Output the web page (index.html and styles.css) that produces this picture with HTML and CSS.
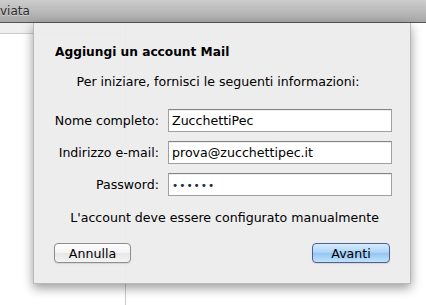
FILE: index.html
```html
<!DOCTYPE html>
<html lang="it">
<head>
    <meta charset="UTF-8">
    <title>Aggiungi un account Mail</title>
    <link rel="stylesheet" href="styles.css">
</head>
<body>
    <div class="window">
        <div class="toolbar">
            <span class="toolbar-title">viata</span>
        </div>

        <div class="content">
            <div class="list-pane">
                <div class="pane-header"></div>
            </div>
            <div class="main-pane"></div>
        </div>

        <!-- account sheet over the mail window -->
        <div class="sheet">
            <div class="sheet-title">Aggiungi un account Mail</div>
            <div class="sheet-intro">Per iniziare, fornisci le seguenti informazioni:</div>

            <div class="form">
                <label class="form-label" for="name">Nome completo:</label>
                <input class="field" id="name" type="text" value="ZucchettiPec">

                <label class="form-label" for="email">Indirizzo e-mail:</label>
                <input class="field" id="email" type="text" value="prova@zucchettipec.it">

                <label class="form-label" for="password">Password:</label>
                <input class="field field-password" id="password" type="password" value="secret">
            </div>

            <div class="sheet-note">L'account deve essere configurato manualmente</div>

            <div class="buttons">
                <button class="button">Annulla</button>
                <button class="button button-default">Avanti</button>
            </div>
        </div>
    </div>
</body>
</html>
```

FILE: styles.css
```css
body {
    margin: 0;
    font-family: "DejaVu Sans", sans-serif;
    font-size: 12.6px;
    color: #000;
    background: #fff;
}

.window {
    position: relative;
    width: 426px;
    height: 305px;
    overflow: hidden;
}

.toolbar {
    height: 22px;
    border-bottom: 1px solid #555;
    background: linear-gradient(#cdcdcd, #a7a7a7);
    display: flex;
    align-items: center;
}

.toolbar-title {
    margin-left: 0;
    font-size: 12px;
    color: #2b2b2b;
    text-shadow: 0 1px 0 rgba(255, 255, 255, 0.45);
}

.content {
    display: flex;
    height: 282px;
}

.list-pane {
    width: 125px;
    border-right: 1px solid #c9c9c9;
}

.pane-header {
    height: 10px;
    background: #efefef;
    border-bottom: 1px solid #cacaca;
}

.main-pane {
    flex: 1;
}

.sheet {
    position: absolute;
    top: 23px;
    left: 33px;
    width: 378px;
    box-sizing: border-box;
    padding: 0 20px 20px;
    background: rgba(236, 236, 236, 0.95);
    border: 1px solid rgba(0, 0, 0, 0.22);
    border-top: none;
    box-shadow: 0 4px 10px rgba(0, 0, 0, 0.4);
}

.sheet-title {
    margin: 21px 0 0 1px;
    font-size: 12.2px;
    font-weight: bold;
    line-height: 16px;
}

.sheet-intro {
    margin-top: 14px;
    padding-right: 8px;
    line-height: 16px;
    text-align: center;
}

.form {
    display: grid;
    grid-template-columns: 105px 224px;
    column-gap: 9px;
    row-gap: 9px;
    margin-top: 19px;
}

.form-label {
    line-height: 23px;
    text-align: right;
}

.field {
    height: 23px;
    box-sizing: border-box;
    margin: 0;
    padding: 0 3px;
    border: 1px solid #a0a0a0;
    border-top-color: #858585;
    background: #fff;
    font: inherit;
    color: #000;
    box-shadow: inset 0 1px 0 rgba(0, 0, 0, 0.07);
    outline: none;
}

.field-password {
    font-size: 10.5px;
    letter-spacing: 1px;
    color: #1c2a44;
}

.sheet-note {
    margin-top: 14px;
    padding-right: 11px;
    line-height: 16px;
    text-align: right;
}

.buttons {
    display: flex;
    justify-content: space-between;
    margin-top: 17px;
}

.button {
    width: 77px;
    height: 20px;
    padding: 0;
    border: 1px solid #8e8e8e;
    border-radius: 4px;
    background: linear-gradient(#fefefe, #f3f3f3 50%, #e6e6e6 51%, #f4f4f4);
    box-shadow: 0 1px 1px rgba(0, 0, 0, 0.1);
    font: inherit;
    color: #000;
}

.button-default {
    width: 78px;
    border-color: #4f6190;
    background: linear-gradient(#d6ebfd, #abd3f6 50%, #92c5f2 51%, #c1e2fc);
}
```
